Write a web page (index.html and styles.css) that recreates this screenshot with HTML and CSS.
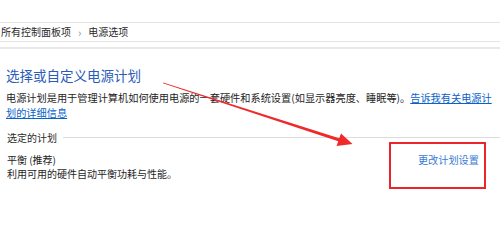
FILE: index.html
```html
<!DOCTYPE html>
<html lang="zh-CN">
<head>
<meta charset="utf-8">
<title>电源选项</title>
<link rel="stylesheet" href="styles.css">
</head>
<body>
<div class="page">
  <div class="topbar"></div>
  <div class="crumbs">
    <span>所有控制面板项</span>
    <span class="chev">›</span>
    <span>电源选项</span>
  </div>
  <div class="rule"></div>
  <main class="content">
    <h1 class="title">选择或自定义电源计划</h1>
    <p class="intro"><span>电源计划是用于管理计算机如何使用电源的一套硬件和系统设置(如显示器亮度、睡眠等)。</span><a class="link" href="#"><span>告诉我有关电源计</span><span>划的详细信息</span></a></p>
    <div class="section">
      <span class="section-label">选定的计划</span>
      <span class="section-line"></span>
    </div>
    <div class="plan">
      <div class="plan-info">
        <div class="plan-name">平衡 (推荐)</div>
        <div class="plan-desc">利用可用的硬件自动平衡功耗与性能。</div>
      </div>
      <a class="plan-link" href="#">更改计划设置</a>
    </div>
  </main>
  <div class="mark-box"></div>
  <svg class="arrow" width="500" height="225" viewBox="0 0 500 225">
    <polygon points="163.1,82.6 339.2,138.2 341,133.6 352.5,144 336.6,146 338.2,141.2 162.9,83.3" fill="#ee2a2a"/>
  </svg>
</div>
</body>
</html>
```

FILE: styles.css
```css
html, body {
  margin: 0;
  padding: 0;
  background: #ffffff;
}

body {
  font-family: "Noto Sans CJK SC", "Microsoft YaHei", sans-serif;
  color: #1e1e1e;
  width: 500px;
  height: 225px;
  overflow: hidden;
}

.page {
  position: relative;
  width: 500px;
  height: 225px;
}

.topbar {
  height: 22px;
  border-bottom: 1px solid #e4e4e4;
}

.crumbs {
  height: 18px;
  display: flex;
  align-items: center;
  gap: 6px;
  padding-left: 1px;
  font-size: 10px;
  line-height: 12px;
  color: #2a2a2a;
  border-bottom: 1px solid #e4e4e4;
  margin-bottom: 5px;
}

.chev {
  color: #8a8a8a;
  font-size: 11px;
  padding: 0 1px;
}

.rule {
  height: 2px;
  background: #e9e9e9;
}

.content {
  padding: 0 4px 0 6px;
}

.title {
  margin: 17px 0 6px;
  font-size: 13.5px;
  line-height: 18px;
  font-weight: normal;
  color: #2a5cb8;
}

.intro {
  margin: 0;
  font-size: 10.2px;
  line-height: 15px;
  color: #1e1e1e;
}

.link {
  color: #0a62c8;
  text-decoration: underline;
}

.section {
  display: flex;
  align-items: center;
  margin-top: 10.5px;
  padding-left: 1px;
  margin-right: -4px;
}

.section-label {
  font-size: 10px;
  line-height: 13px;
  color: #2a2a2a;
}

.section-line {
  flex: 1;
  height: 1px;
  margin-left: 6px;
  background: #dcdcdc;
}

.plan {
  display: flex;
  justify-content: space-between;
  align-items: flex-start;
  margin-top: 9px;
  padding-left: 1px;
  padding-right: 17px;
}

.plan-name,
.plan-desc {
  font-size: 10px;
  line-height: 14.5px;
  color: #1e1e1e;
}

.plan-link {
  font-size: 10.2px;
  line-height: 14.5px;
  color: #3a7bd5;
  text-decoration: none;
}

.mark-box {
  position: absolute;
  left: 389px;
  top: 142px;
  width: 97px;
  height: 47px;
  box-sizing: border-box;
  border: 2px solid #ea262c;
}

.arrow {
  position: absolute;
  left: 0;
  top: 0;
  pointer-events: none;
}
```
